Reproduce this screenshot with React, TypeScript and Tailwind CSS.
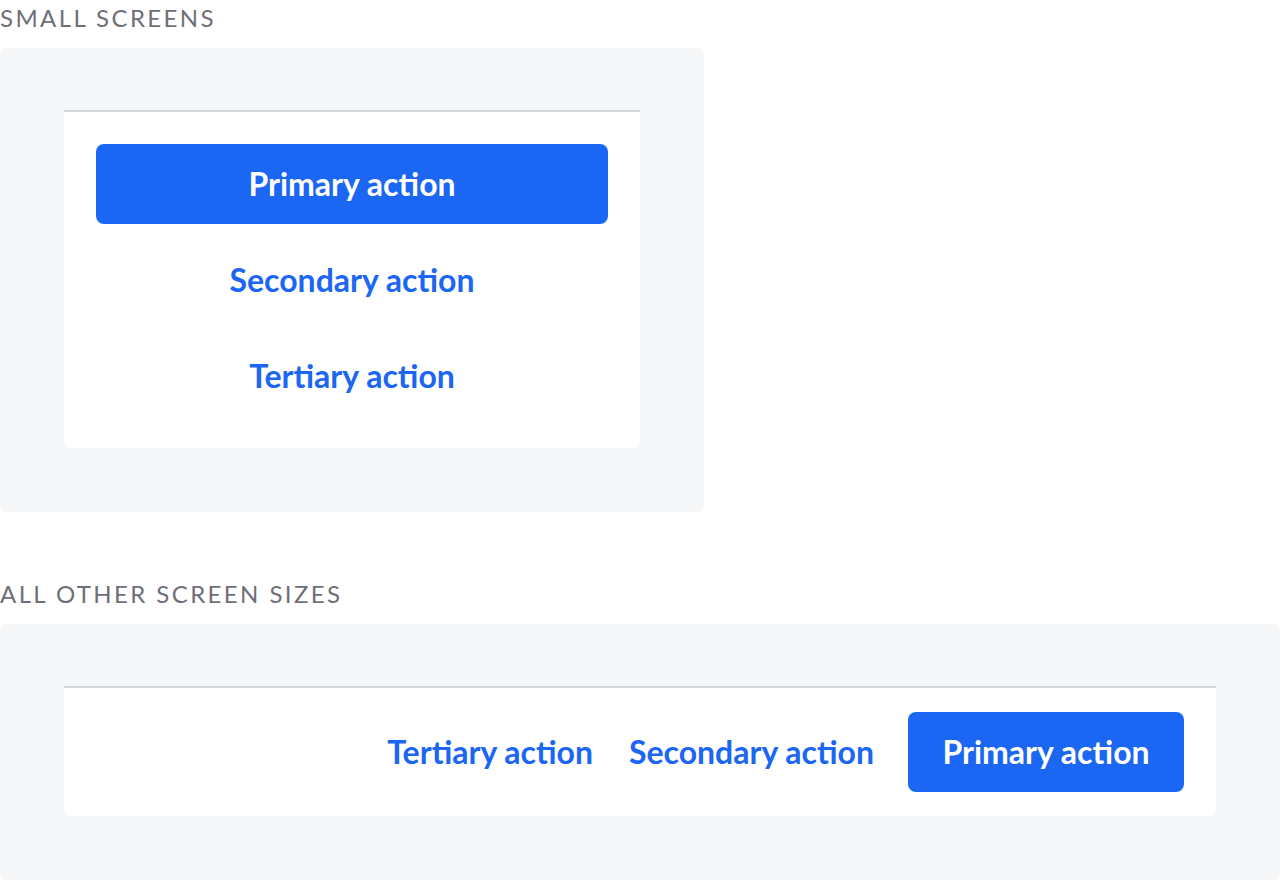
import React from "react";

function SectionLabel({ children }: { children: React.ReactNode }) {
  return (
    <div className="h-12 text-[24px] leading-[36px] tracking-[0.1em] text-[#6e6f78] uppercase">
      {children}
    </div>
  );
}

export default function App() {
  return (
    <div className="w-[1280px] h-[880px] overflow-hidden bg-white font-['Lato',sans-serif]">
      {/* Small screens */}
      <SectionLabel>Small screens</SectionLabel>
      <div className="w-[704px] rounded-lg bg-[#f5f6f8] px-16 pt-[62px] pb-16">
        <div className="rounded-b-lg border-t-2 border-[#d6d7db] bg-white p-8 flex flex-col gap-4">
          <button
            type="button"
            className="h-20 rounded-lg bg-[#1b66f2] text-[32px] font-bold text-white"
          >
            Primary action
          </button>
          <button type="button" className="h-20 text-[32px] font-bold text-[#1b66f2]">
            Secondary action
          </button>
          <button type="button" className="h-20 text-[32px] font-bold text-[#1b66f2]">
            Tertiary action
          </button>
        </div>
      </div>

      {/* All other screen sizes */}
      <div className="mt-16">
        <SectionLabel>All other screen sizes</SectionLabel>
      </div>
      <div className="rounded-lg bg-[#f5f6f8] px-16 pt-[62px] pb-16">
        <div className="rounded-b-lg border-t-2 border-[#d6d7db] bg-white py-6 pr-8 flex items-center justify-end">
          <button type="button" className="h-20 px-[18px] text-[32px] font-bold text-[#1b66f2]">
            Tertiary action
          </button>
          <button type="button" className="h-20 px-[18px] text-[32px] font-bold text-[#1b66f2]">
            Secondary action
          </button>
          <button
            type="button"
            className="ml-4 h-20 w-[276px] rounded-lg bg-[#1b66f2] text-[32px] font-bold text-white"
          >
            Primary action
          </button>
        </div>
      </div>
    </div>
  );
}
